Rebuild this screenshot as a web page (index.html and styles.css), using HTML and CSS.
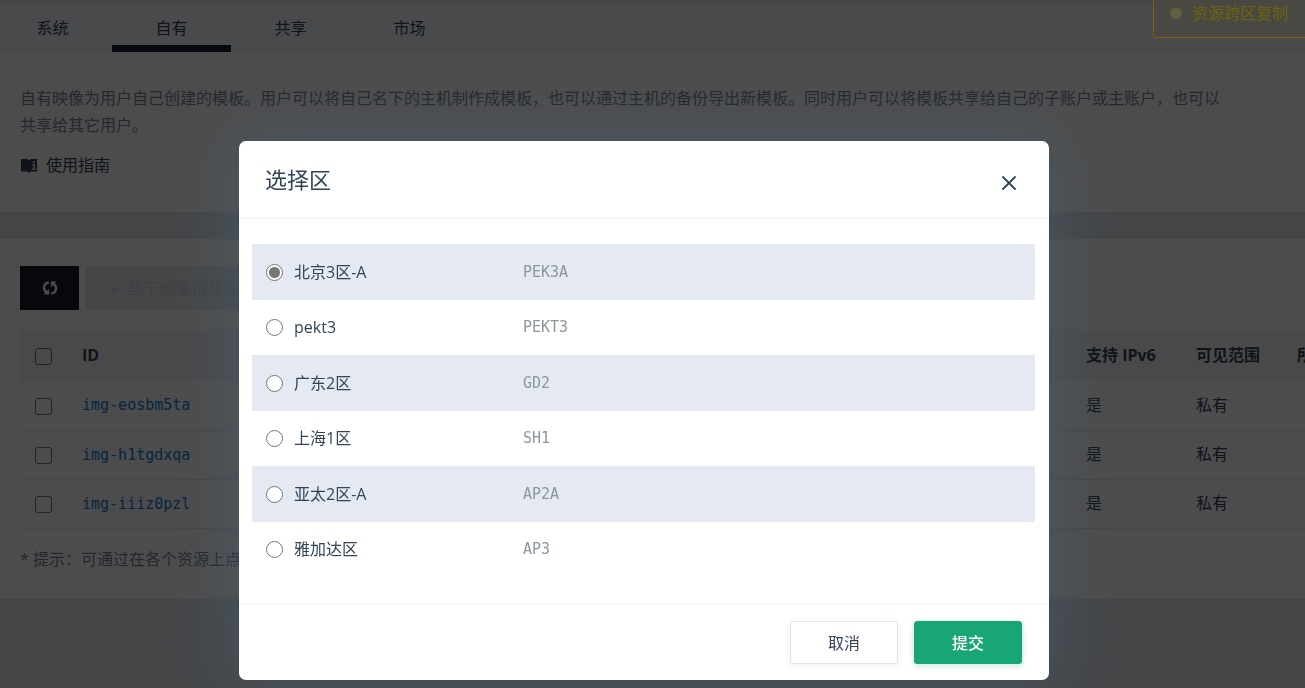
FILE: index.html
```html
<!DOCTYPE html>
<html lang="zh-CN">
<head>
<meta charset="utf-8">
<meta name="viewport" content="width=device-width, initial-scale=1">
<title>选择区</title>
<link rel="stylesheet" href="styles.css">
</head>
<body>
<div class="page">
  <nav class="tabs">
    <a class="tab" href="#system">系统</a>
    <a class="tab tab-active" href="#own">自有</a>
    <a class="tab" href="#shared">共享</a>
    <a class="tab" href="#market">市场</a>
  </nav>

  <section class="intro">
    <p class="intro-text">自有映像为用户自己创建的模板。用户可以将自己名下的主机制作成模板，也可以通过主机的备份导出新模板。同时用户可以将模板共享给自己的子账户或主账户，也可以共享给其它用户。</p>
    <a class="guide" href="#guide">
      <svg class="guide-icon" viewBox="0 0 18 16" aria-hidden="true">
        <path d="M1 1h6l2 1 2-1h6v12.500h-6L9 15l-2-1.500H1z" fill="currentColor"/>
        <path d="M13 3h2v2h-2z M12 6h3v4.500h1V12h-4v-1.500h1V7.500h-1z" fill="#c3cad3"/>
      </svg>
      <span>使用指南</span>
    </a>
  </section>

  <main class="panel">
    <div class="toolbar">
      <button class="refresh" type="button" aria-label="刷新">
        <svg class="refresh-icon" viewBox="0 0 16 16" fill="none" stroke="currentColor" stroke-width="2.400" aria-hidden="true">
          <path d="M6.800 2.500C1.500 3 .500 9 4.200 12"/>
          <path d="M9.200 13.500C14.500 13 15.500 7 11.800 4"/>
          <path d="M1.500 14.500h5.700V8.800z M14.500 1.500H8.800v5.700z" fill="currentColor" stroke="none"/>
        </svg>
      </button>
      <button class="create" type="button" disabled><span class="plus">+</span><span>基于映像创建主机</span></button>
    </div>
    <div class="table-wrap">
      <table class="images">
        <colgroup><col class="col-check"><col class="col-id"><col><col class="col-ipv6"><col class="col-scope"><col class="col-owner"></colgroup>
        <thead>
          <tr><th><input class="check" type="checkbox" aria-label="全选"></th><th>ID</th><th></th><th>支持 IPv6</th><th>可见范围</th><th>所有者</th></tr>
        </thead>
        <tbody>
          <tr><td><input class="check" type="checkbox" aria-label="img-eosbm5ta"></td><td><a class="image-id" href="#img-eosbm5ta">img-eosbm5ta</a></td><td></td><td>是</td><td>私有</td><td></td></tr>
          <tr><td><input class="check" type="checkbox" aria-label="img-h1tgdxqa"></td><td><a class="image-id" href="#img-h1tgdxqa">img-h1tgdxqa</a></td><td></td><td>是</td><td>私有</td><td></td></tr>
          <tr><td><input class="check" type="checkbox" aria-label="img-iiiz0pzl"></td><td><a class="image-id" href="#img-iiiz0pzl">img-iiiz0pzl</a></td><td></td><td>是</td><td>私有</td><td></td></tr>
        </tbody>
      </table>
    </div>
    <p class="hint">* 提示：可通过在各个资源上点击</p>
  </main>
</div>

<div class="overlay">
  <form class="dialog" role="dialog" aria-labelledby="dialog-title">
    <header class="dialog-head">
      <h2 class="dialog-title" id="dialog-title">选择区</h2>
      <button class="close" type="button" aria-label="关闭">
        <svg class="close-icon" viewBox="0 0 16 16" fill="none" stroke="currentColor" stroke-width="1.800" stroke-linecap="round" aria-hidden="true"><path d="M2 2l12 12M14 2 2 14"/></svg>
      </button>
    </header>
    <div class="zones">
      <label class="zone"><input class="radio" type="radio" name="zone" checked><span class="zone-name">北京3区-A</span><span class="zone-code">PEK3A</span></label>
      <label class="zone"><input class="radio" type="radio" name="zone"><span class="zone-name">pekt3</span><span class="zone-code">PEKT3</span></label>
      <label class="zone"><input class="radio" type="radio" name="zone"><span class="zone-name">广东2区</span><span class="zone-code">GD2</span></label>
      <label class="zone"><input class="radio" type="radio" name="zone"><span class="zone-name">上海1区</span><span class="zone-code">SH1</span></label>
      <label class="zone"><input class="radio" type="radio" name="zone"><span class="zone-name">亚太2区-A</span><span class="zone-code">AP2A</span></label>
      <label class="zone"><input class="radio" type="radio" name="zone"><span class="zone-name">雅加达区</span><span class="zone-code">AP3</span></label>
    </div>
    <footer class="dialog-foot">
      <button class="btn" type="button">取消</button>
      <button class="btn btn-primary" type="submit">提交</button>
    </footer>
  </form>
</div>

<div class="toast" role="status"><span class="toast-dot"></span><span>资源跨区复制</span></div>
</body>
</html>
```

FILE: styles.css
```css
* {
  box-sizing: border-box;
}

body {
  margin: 0;
  overflow: hidden;
  background: #e4e8ed;
  color: #324558;
  font: 16px/27px "Open Sans", "Noto Sans CJK SC", sans-serif;
}

button {
  font: inherit;
}

a {
  color: inherit;
  text-decoration: none;
}

.page {
  min-height: 100vh;
  padding-top: 4px;
}

.tabs {
  display: flex;
  height: 48px;
  margin-left: -7px;
  background: #f5f7fa;
}

.tab {
  width: 119px;
  padding-top: 11px;
  border-bottom: 7px solid transparent;
  text-align: center;
}

.tab-active {
  border-bottom-color: #17202e;
}

.intro {
  padding: 33px 80px 33px 20px;
  background: #ffffff;
}

.intro-text {
  margin: 0 0 13px;
  color: #79879c;
}

.guide {
  display: flex;
  align-items: center;
  gap: 8px;
}

.guide-icon {
  width: 18px;
  height: 16px;
}

.panel {
  margin-top: 27px;
  padding: 27px 0 26px 20px;
  background: #ffffff;
}

.toolbar {
  display: flex;
  gap: 6px;
}

.refresh {
  display: grid;
  place-items: center;
  width: 59px;
  height: 44px;
  padding: 0;
  border: 0;
  background: #141d26;
  color: #ffffff;
}

.refresh-icon {
  width: 16px;
  height: 16px;
}

.create {
  display: flex;
  align-items: center;
  gap: 8px;
  height: 44px;
  padding: 0 22px;
  border: 0;
  border-radius: 4px;
  background: #e9ecf1;
  color: #d2d7df;
}

.plus {
  font-size: 22px;
}

.table-wrap {
  margin-top: 20px;
  overflow: hidden;
}

.images {
  width: calc(100% + 96px);
  border-collapse: collapse;
  table-layout: fixed;
}

.images th,
.images td {
  height: 49px;
  padding: 0 16px;
  border-bottom: 1px solid #e4e9f0;
  text-align: left;
  white-space: nowrap;
}

.images th {
  height: 51px;
  border: 0;
  background: #f3f5f9;
  font-weight: 700;
}

.images th:first-child,
.images td:first-child {
  padding: 0 0 0 15px;
}

.col-check {
  width: 46px;
}

.col-id {
  width: 160px;
}

.col-ipv6 {
  width: 110px;
}

.col-scope {
  width: 101px;
}

.col-owner {
  width: 120px;
}

.check {
  display: block;
  appearance: none;
  width: 17px;
  height: 17px;
  margin: 2px 0 0;
  border: 1px solid #767676;
  border-radius: 3px;
}

.image-id {
  color: #0b7ddd;
  font-family: "DejaVu Sans Mono", monospace;
  font-size: 15px;
}

.hint {
  margin: 17px 0 0;
  color: #79879c;
}

.toast {
  position: fixed;
  top: -12px;
  left: calc(100% - 152px);
  display: flex;
  align-items: center;
  gap: 10px;
  width: 200px;
  height: 50px;
  padding-left: 16px;
  border: 1px solid #80600c;
  border-radius: 3px;
  background: #4a4843;
  color: #6c640c;
}

.toast-dot {
  width: 12px;
  height: 12px;
  border-radius: 50%;
  background: #625e40;
}

.overlay {
  position: fixed;
  inset: 0;
  display: flex;
  justify-content: center;
  align-items: flex-end;
  padding: 8px 17px 8px 0;
  background: rgba(0, 0, 0, 0.7);
}

.dialog {
  width: 810px;
  border-radius: 7px;
  background: #ffffff;
  box-shadow: 0 0 60px 4px rgba(76, 102, 124, 0.5);
}

.dialog-head {
  display: flex;
  justify-content: space-between;
  align-items: center;
  height: 78px;
  padding: 0 27px 0 26px;
  border-bottom: 2px solid #f3f5f9;
}

.dialog-title {
  margin: 0;
  font-size: 22px;
  font-weight: 400;
  line-height: 32px;
}

.close {
  display: grid;
  place-items: center;
  width: 26px;
  height: 26px;
  margin-top: 7px;
  padding: 0;
  border: 0;
  background: none;
  color: #324558;
}

.close-icon {
  width: 16px;
  height: 16px;
}

.zones {
  padding: 25px 14px 26px 13px;
}

.zone {
  display: flex;
  align-items: center;
  height: 55px;
  padding: 0 14px;
}

.zone:nth-child(odd) {
  height: 56px;
  background: #e5eaf2;
}

.zone:nth-child(odd) .radio {
  background-color: #ffffff;
}

.radio {
  appearance: none;
  width: 17px;
  height: 17px;
  margin: 0 11px 0 0;
  border: 1px solid #767676;
  border-radius: 50%;
}

.radio:checked {
  background-image: radial-gradient(circle, #767676 5px, transparent 6px);
}

.zone-name {
  width: 229px;
}

.zone-code {
  color: #8c969d;
  font-family: "DejaVu Sans Mono", monospace;
  font-size: 15px;
}

.dialog-foot {
  display: flex;
  justify-content: flex-end;
  gap: 16px;
  padding: 16px 27px;
  border-top: 2px solid #f5f6f8;
}

.btn {
  width: 108px;
  height: 43px;
  padding: 2px 0 0;
  border: 1px solid #dfe3ea;
  border-radius: 3px;
  background: #ffffff;
  color: #324558;
  box-shadow: 0 2px 6px rgba(50, 69, 88, 0.08);
}

.btn-primary {
  border-color: #18a675;
  background: #18a675;
  color: #ffffff;
  font-weight: 500;
  box-shadow: 0 2px 6px rgba(24, 166, 117, 0.25);
}
```
